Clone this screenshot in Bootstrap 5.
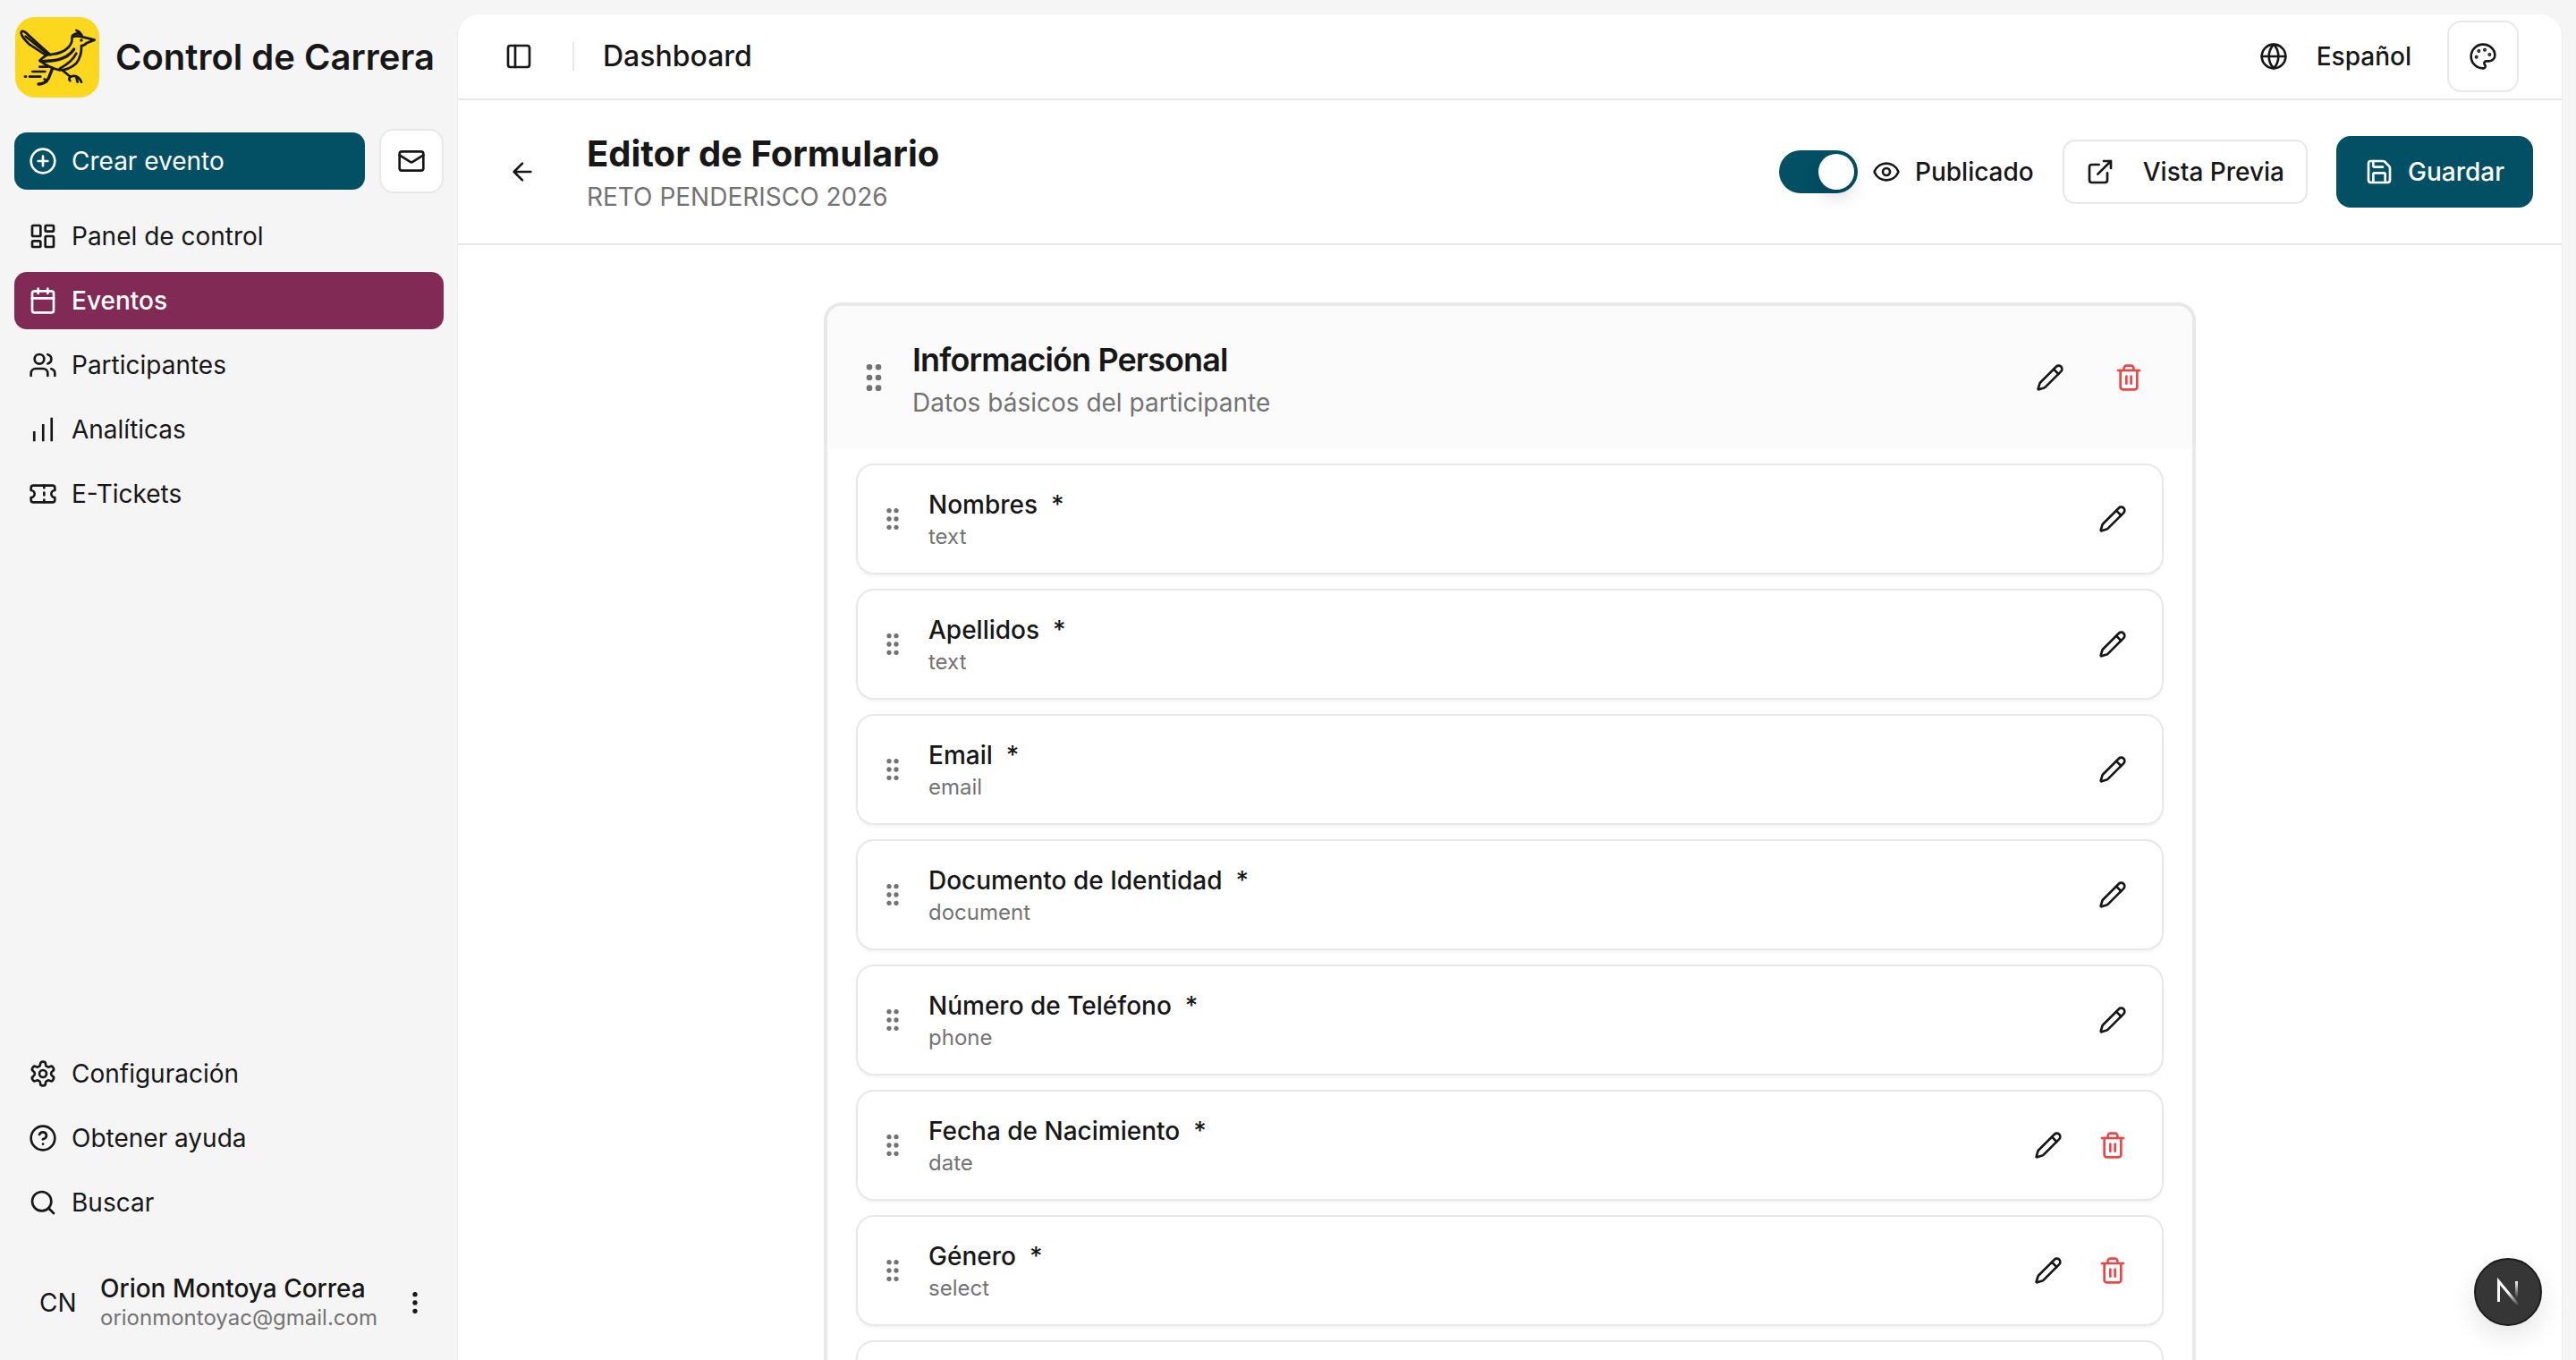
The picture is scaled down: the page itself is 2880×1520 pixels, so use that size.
<!doctype html>
<html lang="es">
<head>
<meta charset="utf-8">
<title>Editor de Formulario</title>
<link href="https://cdn.jsdelivr.net/npm/bootstrap@5.3.0/dist/css/bootstrap.min.css" rel="stylesheet">
<style>
html,body{height:100%;overflow:hidden}
body{background:#f5f5f5;color:#171717;font-family:Inter,"Liberation Sans",sans-serif;font-size:28px;line-height:40px}
.cc-ico{width:32px;height:32px;flex:none;fill:none;stroke:currentColor;stroke-width:2;stroke-linecap:round;stroke-linejoin:round}
.cc-muted{color:#737373}
.cc-side{width:512px;height:100vh;flex:none}
.cc-brand{padding:19px 0 0 17px;height:148px;gap:18px}
.cc-logo{width:94px;height:90px;flex:none;border-radius:22px;background:#fbd71e}
.cc-brandname{font-size:40px;font-weight:600;line-height:90px}
.cc-primary{background:#034f63;color:#fff;border:0;font-size:28px;font-weight:500;line-height:40px}
.cc-primary:hover{background:#034f63;color:#fff}
.cc-create{height:64px;width:392px;margin-left:16px;border-radius:14px;padding:0 16px;gap:16px;font-weight:400}
.cc-outline{background:#fff;border:2px solid #e8e8e8;color:#171717;font-size:28px;font-weight:500;line-height:40px;padding:0}
.cc-outline:hover{background:#fff;border-color:#e8e8e8;color:#171717}
.cc-mail{width:72px;height:72px;margin:-4px 0 -4px 16px;border-radius:16px}
.cc-menu{padding:20px 16px 0;gap:8px}
.cc-link{height:64px;padding:0 16px;gap:16px;border-radius:14px;color:#171717;text-decoration:none}
.cc-link:hover{color:#171717}
.cc-active,.cc-active:hover{background:#812a55;color:#fff;font-weight:500}
.cc-bottom{padding:0 16px;gap:8px;margin-top:auto}
.cc-user{height:88px;margin:36px 0 20px;padding:0 32px 0 44px}
.cc-avatar{width:40px;margin-right:28px;text-align:center;white-space:nowrap}
.cc-uname{font-weight:500;line-height:34px}
.cc-umail{font-size:24px;line-height:32px}
.cc-main{flex:1;min-width:0;height:calc(100vh - 16px);margin:16px 16px 0 0;background:#fff;border-radius:24px 24px 0 0;box-shadow:0 1px 3px rgba(0,0,0,.08);overflow:hidden}
.cc-top{height:96px;flex:none;border-bottom:2px solid #e8e8e8;padding:0 48px 0 36px}
.cc-iconbtn{width:64px;height:64px;flex:none;background:none;border:0;padding:0;color:#171717}
.cc-sep{width:2px;height:32px;background:#e8e8e8;margin:0 32px 0 28px}
.cc-crumb{font-size:32px;font-weight:500}
.cc-lang{margin:0 40px 0 32px;font-weight:500}
.cc-palette{width:80px;height:80px;border-radius:16px}
.cc-bar{height:162px;flex:none;border-bottom:2px solid #e8e8e8;padding:0 32px 0 40px}
.cc-backbtn{margin-right:40px}
.cc-title{font-size:40px;line-height:56px;font-weight:700;margin:0}
.cc-toggle{width:88px;height:48px;border-radius:24px;background:#034f63;padding:4px;justify-content:flex-end}
.cc-thumb{width:40px;height:40px;border-radius:50%;background:#fff;box-shadow:0 10px 20px rgba(0,0,0,.12)}
.cc-preview{height:72px;border-radius:14px;padding:0 24px;gap:32px;margin:0 32px}
.cc-save{height:80px;border-radius:16px;padding:0 32px;gap:16px}
.cc-canvas{padding:64px 0 0;flex:1;overflow:hidden}
.cc-section{width:1534px;margin:0 auto;border:4px solid #e8e8e8;border-radius:20px;overflow:hidden;background:#fff}
.cc-sechead{height:160px;background:#fbfbfb;padding:0 39px 0 32px}
.cc-grip-lg{width:40px;height:40px;color:#737373;margin-right:23px}
.cc-grip{color:#737373;margin-right:24px}
.cc-headtext{padding-top:4px}
.cc-secname{font-size:36px;line-height:48px;font-weight:600;margin:0 0 4px;letter-spacing:-.9px}
.cc-list{padding:16px 32px 32px;gap:16px}
.cc-field{height:124px;flex:none;border:2px solid #e8e8e8;border-radius:20px;padding:0 23px;box-shadow:0 2px 3px rgba(0,0,0,.05)}
.cc-fname{font-weight:500;line-height:40px}
.cc-req{margin-left:15px}
.cc-ftype{font-size:24px;line-height:32px}
.cc-danger{color:#ef4444}
.cc-devtool{position:fixed;left:2766px;top:1406px;width:76px;height:76px;border-radius:50%;background:#363636;border:2px solid #1d1d1d;box-shadow:0 12px 30px rgba(0,0,0,.1)}
</style>
</head>
<body>
<svg width="0" height="0" class="position-absolute">
<defs>
<symbol id="i-plus" viewBox="0 0 24 24"><circle cx="12" cy="12" r="10"/><path d="M8 12h8M12 8v8"/></symbol>
<symbol id="i-mail" viewBox="0 0 24 24"><rect x="2" y="4" width="20" height="16" rx="2"/><path d="m22 7-8.97 5.7a1.94 1.94 0 0 1-2.06 0L2 7"/></symbol>
<symbol id="i-dash" viewBox="0 0 24 24"><rect x="3" y="3" width="7" height="9" rx="1"/><rect x="14" y="3" width="7" height="5" rx="1"/><rect x="14" y="12" width="7" height="9" rx="1"/><rect x="3" y="16" width="7" height="5" rx="1"/></symbol>
<symbol id="i-cal" viewBox="0 0 24 24"><path d="M8 2v4M16 2v4"/><rect x="3" y="4" width="18" height="18" rx="2"/><path d="M3 10h18"/></symbol>
<symbol id="i-users" viewBox="0 0 24 24"><path d="M16 21v-2a4 4 0 0 0-4-4H6a4 4 0 0 0-4 4v2"/><circle cx="9" cy="7" r="4"/><path d="M22 21v-2a4 4 0 0 0-3-3.87M16 3.13a4 4 0 0 1 0 7.75"/></symbol>
<symbol id="i-chart" viewBox="0 0 24 24"><path stroke-linecap="butt" d="M4.7 22v-8.5M12.2 22V7.5M19.3 22V2"/></symbol>
<symbol id="i-ticket" viewBox="0 0 24 24"><path d="M2 9a3 3 0 0 1 0 6v2a2 2 0 0 0 2 2h16a2 2 0 0 0 2-2v-2a3 3 0 0 1 0-6V7a2 2 0 0 0-2-2H4a2 2 0 0 0-2 2Z"/><path d="M13 5v2M13 17v2M13 11v2"/></symbol>
<symbol id="i-gear" viewBox="0 0 24 24"><path d="M12.22 2h-.44a2 2 0 0 0-2 2v.18a2 2 0 0 1-1 1.73l-.43.25a2 2 0 0 1-2 0l-.15-.08a2 2 0 0 0-2.73.73l-.22.38a2 2 0 0 0 .73 2.73l.15.1a2 2 0 0 1 1 1.72v.51a2 2 0 0 1-1 1.74l-.15.09a2 2 0 0 0-.73 2.73l.22.38a2 2 0 0 0 2.73.73l.15-.08a2 2 0 0 1 2 0l.43.25a2 2 0 0 1 1 1.73V20a2 2 0 0 0 2 2h.44a2 2 0 0 0 2-2v-.18a2 2 0 0 1 1-1.73l.43-.25a2 2 0 0 1 2 0l.15.08a2 2 0 0 0 2.73-.73l.22-.39a2 2 0 0 0-.73-2.73l-.15-.08a2 2 0 0 1-1-1.74v-.5a2 2 0 0 1 1-1.74l.15-.09a2 2 0 0 0 .73-2.73l-.22-.38a2 2 0 0 0-2.73-.73l-.15.08a2 2 0 0 1-2 0l-.43-.25a2 2 0 0 1-1-1.73V4a2 2 0 0 0-2-2z"/><circle cx="12" cy="12" r="3"/></symbol>
<symbol id="i-help" viewBox="0 0 24 24"><circle cx="12" cy="12" r="10"/><path d="M9.09 9a3 3 0 0 1 5.83 1c0 2-3 3-3 3M12 17h.01"/></symbol>
<symbol id="i-search" viewBox="0 0 24 24"><path d="m21 21-4.34-4.34"/><circle cx="11" cy="11" r="8"/></symbol>
<symbol id="i-dots" viewBox="0 0 24 24"><circle cx="12" cy="12" r="1"/><circle cx="12" cy="5" r="1"/><circle cx="12" cy="19" r="1"/></symbol>
<symbol id="i-panel" viewBox="0 0 24 24"><rect x="3" y="3" width="18" height="18" rx="2"/><path d="M9 3v18"/></symbol>
<symbol id="i-back" viewBox="0 0 24 24"><path d="m12 19-7-7 7-7M19 12H5"/></symbol>
<symbol id="i-globe" viewBox="0 0 24 24"><circle cx="12" cy="12" r="10"/><path d="M12 2a14.5 14.5 0 0 0 0 20 14.5 14.5 0 0 0 0-20M2 12h20"/></symbol>
<symbol id="i-palette" viewBox="0 0 24 24"><path d="M12 22a1 1 0 0 1 0-20 10 9 0 0 1 10 9 5 5 0 0 1-5 5h-2.25a1.75 1.75 0 0 0-1.4 2.8l.3.4a1.75 1.75 0 0 1-1.4 2.8z"/><circle cx="13.5" cy="6.5" r=".5" fill="currentColor"/><circle cx="17.5" cy="10.5" r=".5" fill="currentColor"/><circle cx="6.5" cy="12.5" r=".5" fill="currentColor"/><circle cx="8.5" cy="7.5" r=".5" fill="currentColor"/></symbol>
<symbol id="i-eye" viewBox="0 0 24 24"><path d="M2.062 12.348a1 1 0 0 1 0-.696 10.75 10.75 0 0 1 19.876 0 1 1 0 0 1 0 .696 10.75 10.75 0 0 1-19.876 0"/><circle cx="12" cy="12" r="3"/></symbol>
<symbol id="i-ext" viewBox="0 0 24 24"><path d="M15 3h6v6M10 14 21 3M18 13v6a2 2 0 0 1-2 2H5a2 2 0 0 1-2-2V8a2 2 0 0 1 2-2h6"/></symbol>
<symbol id="i-save" viewBox="0 0 24 24"><path d="M15.2 3a2 2 0 0 1 1.4.6l3.8 3.8a2 2 0 0 1 .6 1.4V19a2 2 0 0 1-2 2H5a2 2 0 0 1-2-2V5a2 2 0 0 1 2-2z"/><path d="M17 21v-7a1 1 0 0 0-1-1H8a1 1 0 0 0-1 1v7M7 3v4a1 1 0 0 0 1 1h7"/></symbol>
<symbol id="i-pen" viewBox="0 0 24 24"><path d="M21.174 6.812a1 1 0 0 0-3.986-3.987L3.842 16.174a2 2 0 0 0-.5.83l-1.321 4.352a.5.5 0 0 0 .623.622l4.353-1.32a2 2 0 0 0 .83-.497z"/><path d="m15 5 4 4"/></symbol>
<symbol id="i-trash" viewBox="0 0 24 24"><path d="M3 6h18M19 6v14c0 1-1 2-2 2H7c-1 0-2-1-2-2V6M8 6V4c0-1 1-2 2-2h4c1 0 2 1 2 2v2M10 11v6M14 11v6"/></symbol>
<symbol id="i-grip" viewBox="0 0 24 24"><circle cx="9" cy="12" r="1"/><circle cx="9" cy="5" r="1"/><circle cx="9" cy="19" r="1"/><circle cx="15" cy="12" r="1"/><circle cx="15" cy="5" r="1"/><circle cx="15" cy="19" r="1"/></symbol>
<symbol id="i-bird" viewBox="0 0 282 270">
  <g fill="none" stroke="#171717" stroke-width="8" stroke-linecap="round" stroke-linejoin="round">
  <path d="M118 127Q70 85 35 52 20 42 20 55 24 70 48 92L104 129"/>
  <path d="M35 65 110 125"/>
  <path d="M104 129Q112 126 118 126 160 122 178 102 194 85 190 68 203 60 230 68L266 77 240 87Q232 96 222 96 224 130 205 155 180 178 150 178 115 172 82 146 92 136 104 129Z"/>
  <path stroke-width="10" d="M85 148Q140 150 172 132 190 120 197 108"/>
  <path d="M150 172Q190 152 205 122"/>
  <path d="M205 45Q218 50 224 63M192 62Q203 52 215 56"/>
  <path stroke-width="10" d="M125 172Q118 190 112 205 100 225 78 225"/>
  <path d="M98 208 106 216M160 180 185 200Q210 190 222 218M185 200Q178 208 184 214M205 203 209 218"/>
  <path d="M82 167H108M58 183H100M48 200H85M33 200h3"/>
  <circle cx="222" cy="78" r="5" fill="#171717" stroke="none"/>
  </g>
</symbol>
</defs>
</svg>

<div class="d-flex">
  <aside class="cc-side d-flex flex-column">
    <div class="cc-brand d-flex align-items-start">
      <svg class="cc-logo"><use href="#i-bird"/></svg>
      <div class="cc-brandname text-nowrap">Control de Carrera</div>
    </div>
    <div class="d-flex align-items-center">
      <button class="btn cc-primary cc-create d-flex align-items-center" type="button"><svg class="cc-ico"><use href="#i-plus"/></svg>Crear evento</button>
      <button class="btn cc-outline cc-mail d-flex align-items-center justify-content-center" type="button" aria-label="Correo"><svg class="cc-ico"><use href="#i-mail"/></svg></button>
    </div>
    <nav class="cc-menu d-flex flex-column">
      <a class="cc-link d-flex align-items-center" href="#"><svg class="cc-ico"><use href="#i-dash"/></svg>Panel de control</a>
      <a class="cc-link cc-active d-flex align-items-center" href="#"><svg class="cc-ico"><use href="#i-cal"/></svg>Eventos</a>
      <a class="cc-link d-flex align-items-center" href="#"><svg class="cc-ico"><use href="#i-users"/></svg>Participantes</a>
      <a class="cc-link d-flex align-items-center" href="#"><svg class="cc-ico"><use href="#i-chart"/></svg>Analíticas</a>
      <a class="cc-link d-flex align-items-center" href="#"><svg class="cc-ico"><use href="#i-ticket"/></svg>E-Tickets</a>
    </nav>
    <nav class="cc-bottom d-flex flex-column">
      <a class="cc-link d-flex align-items-center" href="#"><svg class="cc-ico"><use href="#i-gear"/></svg>Configuración</a>
      <a class="cc-link d-flex align-items-center" href="#"><svg class="cc-ico"><use href="#i-help"/></svg>Obtener ayuda</a>
      <a class="cc-link d-flex align-items-center" href="#"><svg class="cc-ico"><use href="#i-search"/></svg>Buscar</a>
    </nav>
    <div class="cc-user d-flex align-items-center">
      <div class="cc-avatar">CN</div>
      <div class="flex-grow-1">
        <div class="cc-uname">Orion Montoya Correa</div>
        <div class="cc-umail cc-muted">orionmontoyac@gmail.com</div>
      </div>
      <svg class="cc-ico"><use href="#i-dots"/></svg>
    </div>
  </aside>

  <main class="cc-main d-flex flex-column">
    <header class="cc-top d-flex align-items-center">
      <button class="cc-iconbtn d-flex align-items-center justify-content-center" type="button" aria-label="Panel"><svg class="cc-ico"><use href="#i-panel"/></svg></button>
      <div class="cc-sep"></div>
      <div class="cc-crumb">Dashboard</div>
      <div class="ms-auto d-flex align-items-center">
        <svg class="cc-ico"><use href="#i-globe"/></svg>
        <span class="cc-lang">Español</span>
        <button class="btn cc-outline cc-palette d-flex align-items-center justify-content-center" type="button" aria-label="Tema"><svg class="cc-ico"><use href="#i-palette"/></svg></button>
      </div>
    </header>
    <div class="cc-bar d-flex align-items-center">
      <button class="cc-iconbtn cc-backbtn d-flex align-items-center justify-content-center" type="button" aria-label="Volver"><svg class="cc-ico"><use href="#i-back"/></svg></button>
      <div>
        <h1 class="cc-title">Editor de Formulario</h1>
        <div class="cc-muted">RETO PENDERISCO 2026</div>
      </div>
      <div class="ms-auto d-flex align-items-center">
        <div class="cc-toggle d-flex me-3"><div class="cc-thumb"></div></div>
        <svg class="cc-ico me-3"><use href="#i-eye"/></svg>
        <span class="fw-medium">Publicado</span>
        <button class="btn cc-outline cc-preview d-flex align-items-center" type="button"><svg class="cc-ico"><use href="#i-ext"/></svg>Vista Previa</button>
        <button class="btn cc-primary cc-save d-flex align-items-center" type="button"><svg class="cc-ico"><use href="#i-save"/></svg>Guardar</button>
      </div>
    </div>
    <div class="cc-canvas">
      <section class="cc-section">
        <div class="cc-sechead d-flex align-items-center">
          <svg class="cc-ico cc-grip-lg"><use href="#i-grip"/></svg>
          <div class="flex-grow-1 cc-headtext">
            <h2 class="cc-secname">Información Personal</h2>
            <div class="cc-muted">Datos básicos del participante</div>
          </div>
          <div class="d-flex gap-4">
            <button class="cc-iconbtn d-flex align-items-center justify-content-center" type="button" aria-label="Editar"><svg class="cc-ico"><use href="#i-pen"/></svg></button>
            <button class="cc-iconbtn cc-danger d-flex align-items-center justify-content-center" type="button" aria-label="Eliminar"><svg class="cc-ico"><use href="#i-trash"/></svg></button>
          </div>
        </div>
        <div class="cc-list d-flex flex-column">
          <div class="cc-field d-flex align-items-center"><svg class="cc-ico cc-grip"><use href="#i-grip"/></svg><div class="flex-grow-1"><div class="cc-fname">Nombres<span class="cc-req">*</span></div><div class="cc-ftype cc-muted">text</div></div><button class="cc-iconbtn d-flex align-items-center justify-content-center" type="button" aria-label="Editar"><svg class="cc-ico"><use href="#i-pen"/></svg></button></div>
          <div class="cc-field d-flex align-items-center"><svg class="cc-ico cc-grip"><use href="#i-grip"/></svg><div class="flex-grow-1"><div class="cc-fname">Apellidos<span class="cc-req">*</span></div><div class="cc-ftype cc-muted">text</div></div><button class="cc-iconbtn d-flex align-items-center justify-content-center" type="button" aria-label="Editar"><svg class="cc-ico"><use href="#i-pen"/></svg></button></div>
          <div class="cc-field d-flex align-items-center"><svg class="cc-ico cc-grip"><use href="#i-grip"/></svg><div class="flex-grow-1"><div class="cc-fname">Email<span class="cc-req">*</span></div><div class="cc-ftype cc-muted">email</div></div><button class="cc-iconbtn d-flex align-items-center justify-content-center" type="button" aria-label="Editar"><svg class="cc-ico"><use href="#i-pen"/></svg></button></div>
          <div class="cc-field d-flex align-items-center"><svg class="cc-ico cc-grip"><use href="#i-grip"/></svg><div class="flex-grow-1"><div class="cc-fname">Documento de Identidad<span class="cc-req">*</span></div><div class="cc-ftype cc-muted">document</div></div><button class="cc-iconbtn d-flex align-items-center justify-content-center" type="button" aria-label="Editar"><svg class="cc-ico"><use href="#i-pen"/></svg></button></div>
          <div class="cc-field d-flex align-items-center"><svg class="cc-ico cc-grip"><use href="#i-grip"/></svg><div class="flex-grow-1"><div class="cc-fname">Número de Teléfono<span class="cc-req">*</span></div><div class="cc-ftype cc-muted">phone</div></div><button class="cc-iconbtn d-flex align-items-center justify-content-center" type="button" aria-label="Editar"><svg class="cc-ico"><use href="#i-pen"/></svg></button></div>
          <div class="cc-field d-flex align-items-center"><svg class="cc-ico cc-grip"><use href="#i-grip"/></svg><div class="flex-grow-1"><div class="cc-fname">Fecha de Nacimiento<span class="cc-req">*</span></div><div class="cc-ftype cc-muted">date</div></div><div class="d-flex gap-2"><button class="cc-iconbtn d-flex align-items-center justify-content-center" type="button" aria-label="Editar"><svg class="cc-ico"><use href="#i-pen"/></svg></button><button class="cc-iconbtn cc-danger d-flex align-items-center justify-content-center" type="button" aria-label="Eliminar"><svg class="cc-ico"><use href="#i-trash"/></svg></button></div></div>
          <div class="cc-field d-flex align-items-center"><svg class="cc-ico cc-grip"><use href="#i-grip"/></svg><div class="flex-grow-1"><div class="cc-fname">Género<span class="cc-req">*</span></div><div class="cc-ftype cc-muted">select</div></div><div class="d-flex gap-2"><button class="cc-iconbtn d-flex align-items-center justify-content-center" type="button" aria-label="Editar"><svg class="cc-ico"><use href="#i-pen"/></svg></button><button class="cc-iconbtn cc-danger d-flex align-items-center justify-content-center" type="button" aria-label="Eliminar"><svg class="cc-ico"><use href="#i-trash"/></svg></button></div></div>
          <div class="cc-field"></div>
        </div>
      </section>
    </div>
  </main>
</div>

<div class="cc-devtool d-flex align-items-center justify-content-center">
  <svg width="34" height="34" viewBox="0 0 34 34" fill="none" aria-label="Next.js">
    <defs><linearGradient id="cc-n" x1="8" y1="5" x2="30" y2="31" gradientUnits="userSpaceOnUse"><stop offset=".45" stop-color="#fff"/><stop offset="1" stop-color="#fff" stop-opacity="0"/></linearGradient>
    <linearGradient id="cc-n2" x1="0" y1="4" x2="0" y2="24" gradientUnits="userSpaceOnUse"><stop offset="0" stop-color="#fff"/><stop offset="1" stop-color="#fff" stop-opacity="0"/></linearGradient></defs>
    <path d="M6.5 28V5L28 31" stroke="url(#cc-n)" stroke-width="3"/>
    <path d="M26.5 5v19" stroke="url(#cc-n2)" stroke-width="3"/>
  </svg>
</div>
<script src="https://cdn.jsdelivr.net/npm/bootstrap@5.3.0/dist/js/bootstrap.bundle.min.js"></script>
</body>
</html>
